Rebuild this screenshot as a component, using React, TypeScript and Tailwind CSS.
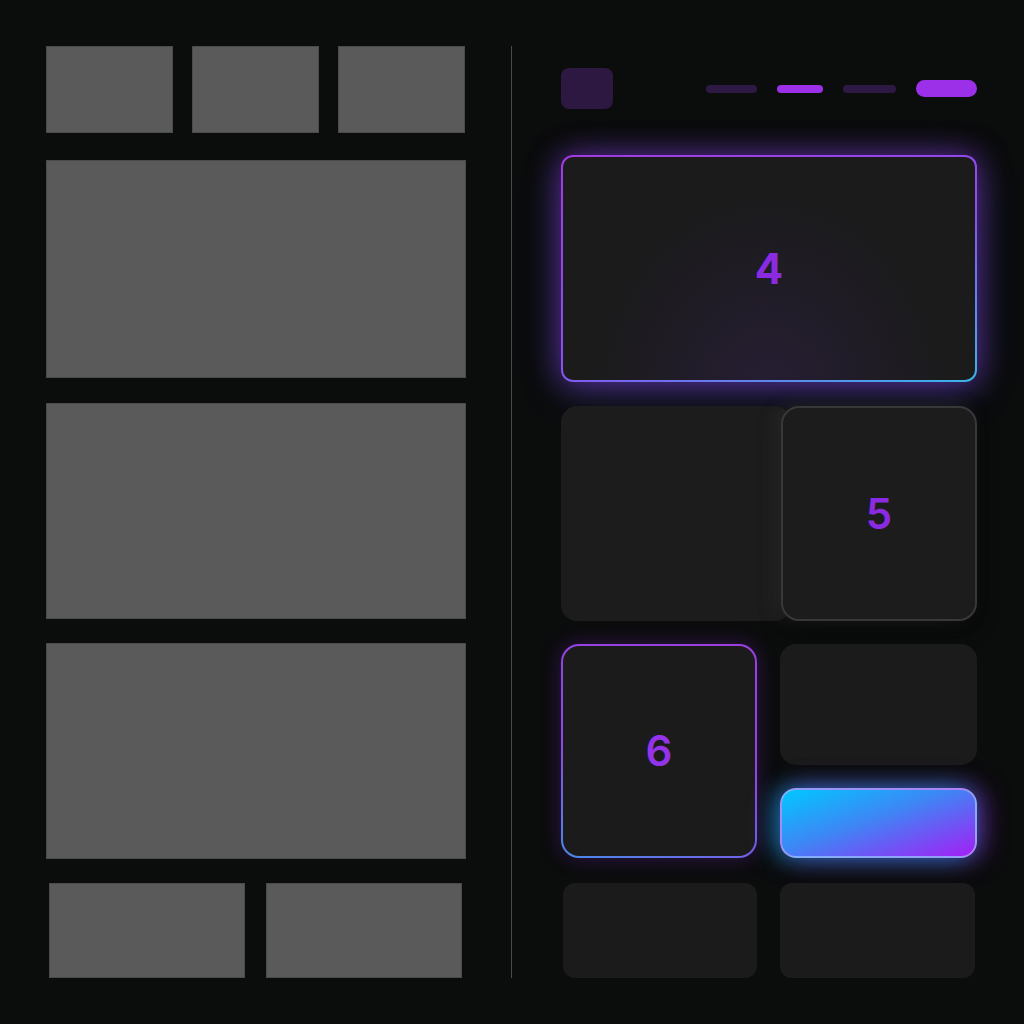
export default function App() {
  return (
    <div className="w-[1024px] h-[1024px] bg-[#0b0c0c] flex font-['Inter','Liberation_Sans',sans-serif] overflow-hidden">
      {/* left wireframe column */}
      <div className="pl-[46px] pt-[46px] w-[466px] shrink-0 flex flex-col">
        <div className="flex gap-[19px] h-[87px]">
          <div className="w-[127px] bg-[#5a5a5a] border border-[#4a4a4a]" />
          <div className="w-[127px] bg-[#5a5a5a] border border-[#4a4a4a]" />
          <div className="w-[127px] bg-[#5a5a5a] border border-[#4a4a4a]" />
        </div>
        <div className="mt-[27px] h-[218px] w-[420px] bg-[#5a5a5a] border border-[#4a4a4a]" />
        <div className="mt-[25px] h-[216px] w-[420px] bg-[#5a5a5a] border border-[#4a4a4a]" />
        <div className="mt-[24px] h-[216px] w-[420px] bg-[#5a5a5a] border border-[#4a4a4a]" />
        <div className="mt-[24px] h-[95px] flex gap-[21px] pl-[3px]">
          <div className="w-[196px] bg-[#5a5a5a] border border-[#4a4a4a]" />
          <div className="w-[196px] bg-[#5a5a5a] border border-[#4a4a4a]" />
        </div>
      </div>

      {/* divider */}
      <div className="ml-[45px] mt-[46px] w-px h-[932px] bg-[#4a4a4a] shrink-0" />

      {/* right styled column */}
      <div className="ml-[49px] w-[416px] shrink-0 flex flex-col">
        <div className="mt-[68px] h-[41px] flex items-center">
          <div className="w-[52px] h-[41px] rounded-lg bg-[#2c1840]" />
          <div className="ml-auto flex items-center gap-[20px]">
            <div className="w-[51px] h-[8px] rounded-full bg-[#2e1944]" />
            <div className="w-[46px] h-[8px] rounded-full bg-[#9b30e8]" />
            <div className="w-[53px] h-[8px] rounded-full bg-[#2e1944]" />
            <div className="w-[61px] h-[17px] rounded-full bg-[#9b30e8]" />
          </div>
        </div>

        <div className="mt-[46px] h-[227px] rounded-xl border-2 border-transparent [background:radial-gradient(ellipse_at_50%_110%,rgba(90,40,160,0.18),transparent_60%)_padding-box,linear-gradient(#1b1b1c,#1b1b1c)_padding-box,linear-gradient(160deg,#a23be0_0%,#8a4ef0_55%,#38b6e8_100%)_border-box] shadow-[0_0_30px_rgba(150,50,230,0.55),0_8px_40px_rgba(70,110,240,0.3)] flex items-center justify-center">
          <span className="text-[42px] font-bold text-[#8a2be2] leading-none">4</span>
        </div>

        <div className="mt-[24px] h-[215px] flex">
          <div className="w-[230px] rounded-2xl bg-[#1c1c1c]" />
          <div className="-ml-[10px] w-[196px] rounded-[18px] bg-[#1c1c1c] border-2 border-[#383838] shadow-[-6px_0_18px_rgba(90,90,90,0.25),0_8px_20px_rgba(0,0,0,0.6)] flex items-center justify-center">
            <span className="text-[42px] font-semibold text-[#8a2be2] leading-none">5</span>
          </div>
        </div>

        <div className="mt-[23px] flex gap-[23px]">
          <div className="w-[196px] h-[214px] rounded-[18px] border-2 border-transparent [background:linear-gradient(#1b1b1c,#1b1b1c)_padding-box,linear-gradient(200deg,#9c3fe0_0%,#8a4ae6_60%,#4a8ae8_100%)_border-box] shadow-[0_0_20px_rgba(120,40,200,0.35)] flex items-center justify-center">
            <span className="text-[42px] font-semibold text-[#9333ea] leading-none">6</span>
          </div>
          <div className="w-[197px] flex flex-col">
            <div className="h-[121px] rounded-2xl bg-[#1b1b1b]" />
            <div className="mt-[23px] h-[70px] rounded-2xl border-2 border-[#b8a8f5]/70 bg-[linear-gradient(160deg,#00c8ff_0%,#3e86f5_45%,#a41ff5_100%)] shadow-[-6px_0_24px_rgba(0,190,255,0.55),6px_0_26px_rgba(160,40,240,0.55)]" />
          </div>
        </div>

        <div className="mt-[25px] flex gap-[23px] pl-[2px]">
          <div className="w-[194px] h-[95px] rounded-xl bg-[#1b1b1b]" />
          <div className="w-[195px] h-[95px] rounded-xl bg-[#1b1b1b]" />
        </div>
      </div>
    </div>
  );
}
